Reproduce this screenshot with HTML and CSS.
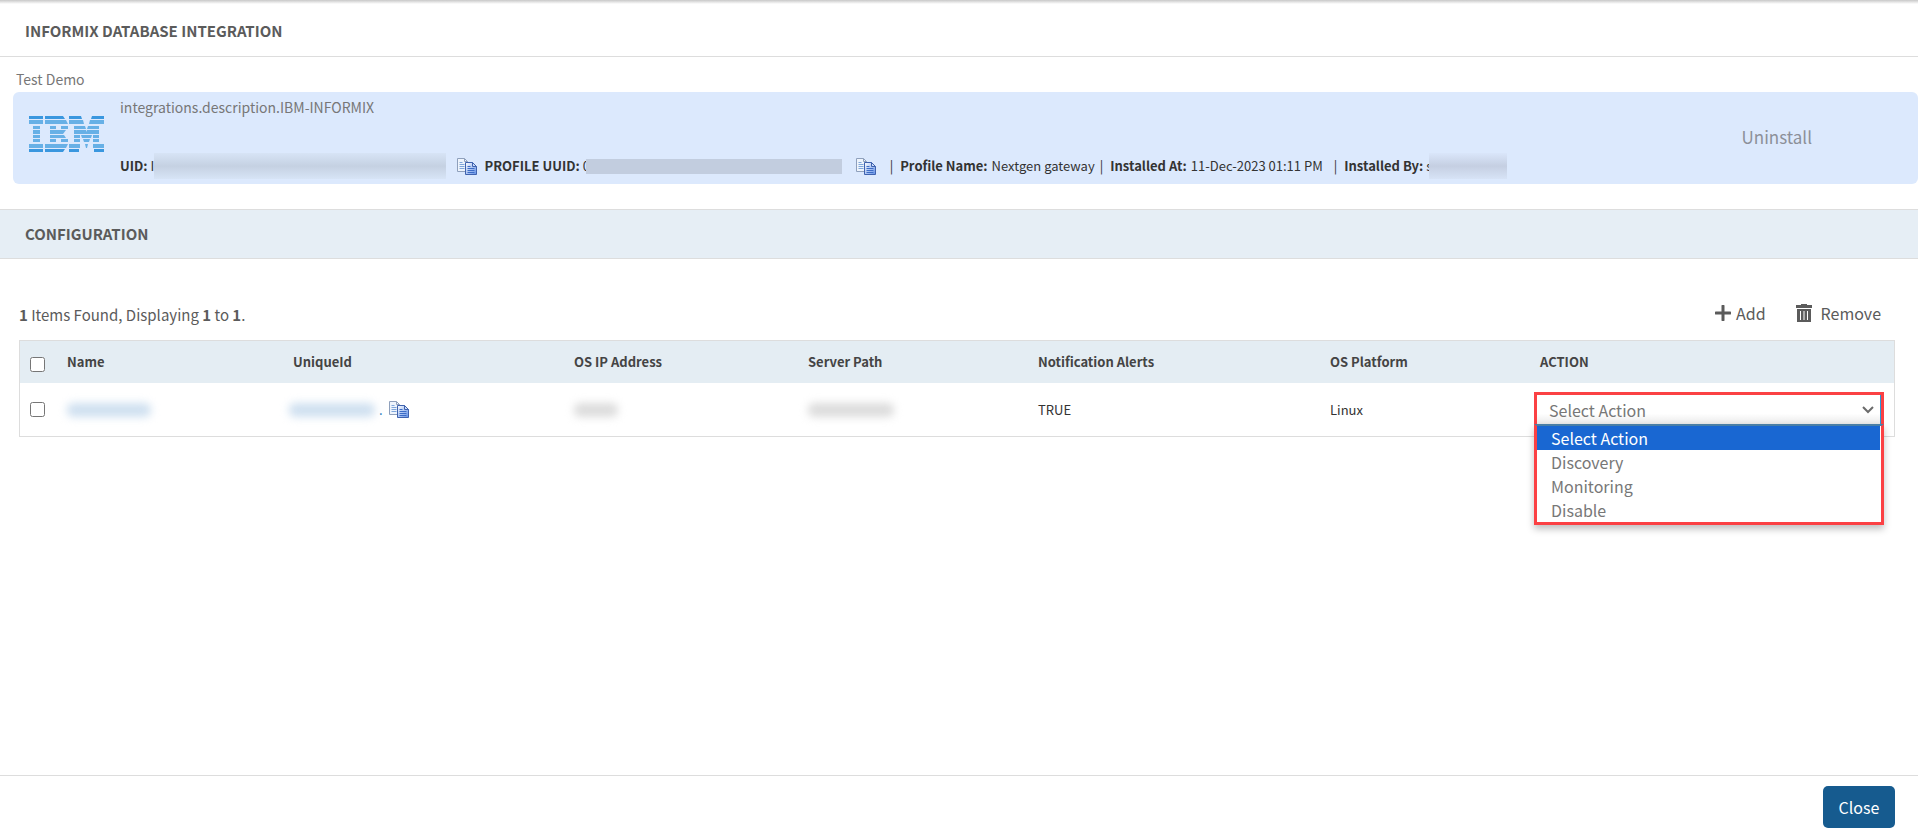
FILE: index.html
```html
<!DOCTYPE html>
<html lang="en">
<head>
<meta charset="utf-8">
<title>Informix Database Integration</title>
<link rel="stylesheet" href="styles.css">
</head>
<body>

<svg class="defs" width="0" height="0">
	<defs>
		<linearGradient id="pageFill" x1="0" y1="0" x2="1" y2="1">
			<stop offset="0" stop-color="#fff"/>
			<stop offset="1" stop-color="#5f8ee6"/>
		</linearGradient>
		<symbol id="copy" viewBox="0 0 20 17">
			<path d="M.5.5h7l3 3v10H.5z" fill="#eef4fc" stroke="#8fa0bc"/>
			<path d="M7.500.5v3h3" fill="none" stroke="#8fa0bc"/>
			<path d="M2.500 4.500h3M2.500 6.500h5M2.500 8.500h5M2.500 10.500h5" stroke="#7fa6da"/>
			<path d="M8.500 4.500h7l4 4v8h-11z" fill="url(#pageFill)" stroke="#3f62ae"/>
			<path d="M15.500 4.500v4h4z" fill="#c9dafa" stroke="#3f62ae"/>
			<path d="M10.500 8.500h3M10.500 10.500h7M10.500 12.500h7M10.500 14.500h7" stroke="#3d6cc6"/>
		</symbol>
	</defs>
</svg>

<div class="header">
	<h1>INFORMIX DATABASE INTEGRATION</h1>
</div>

<div class="app">
	<div class="app-name">Test Demo</div>
	<div class="card">
		<svg class="logo" viewBox="0 0 75 36" role="img" aria-label="IBM">
			<g fill="#3a97df">
				<path d="M0 0h14v3H0zM16 0h18l2 3H16zM40 0h12l1 3H40zM63 0h12v3H62z"/>
				<path d="M0 33h14v3H0zM16 33h20l-2 3H16zM40 33h10v3H40zM65 33h10v3H65z"/>
			</g>
			<g fill="#67b0e6">
				<path d="M0 4h14v4H0zM16 4h21l2 4H16zM40 4h14l1 4H40zM61 4h14v4H60z"/>
				<path d="M4 10h7v3H4zM21 10h6v3h-6zM32 10h7v3h-7zM45 10h11l1 3H45zM59 10h11v3H58z"/>
				<path d="M4 14h7v4H4zM21 14h16l-3 4H21zM45 14h12l1 4H45zM58 14h12v4H57z"/>
				<path d="M4 19h7v3H4zM21 19h14l2 3H21zM45 19h6v3h-6zM52 19h11l-1 3h-9zM64 19h6v3h-6z"/>
				<path d="M4 23h7v3H4zM21 23h6v3h-6zM32 23h7v3h-7zM45 23h6v3h-6zM54 23h7l-1 3h-5zM64 23h6v3h-6z"/>
				<path d="M0 28h14v4H0zM16 28h23l-2 4H16zM40 28h11v4H40zM56 28h3l-1 4h-1zM64 28h11v4H64z"/>
			</g>
		</svg>
		<div class="info">
			<div class="desc">integrations.description.IBM-INFORMIX</div>
			<div class="meta">
				<b>UID:</b><span class="frag">I</span><span class="mask mask-uid"></span>
				<button class="copy" aria-label="Copy UID"><svg><use href="#copy"/></svg></button>
				<b>PROFILE UUID:</b><span class="frag">0</span><span class="mask mask-uuid"></span>
				<button class="copy" aria-label="Copy profile UUID"><svg><use href="#copy"/></svg></button>
				<span class="sep first">|</span><b>Profile Name:</b><span class="val">Nextgen gateway</span>
				<span class="sep">|</span><b>Installed At:</b><span class="val">11-Dec-2023 01:11 PM</span>
				<span class="sep wide">|</span><b>Installed By:</b><span class="frag">s</span><span class="mask mask-user"></span>
			</div>
		</div>
		<button class="uninstall">Uninstall</button>
	</div>
</div>

<div class="section">
	<h2>CONFIGURATION</h2>
</div>

<div class="content">
	<div class="toolbar">
		<div class="count"><b>1</b> Items Found, Displaying <b>1</b> to <b>1</b>.</div>
		<button class="tool">
			<svg width="16" height="16" viewBox="0 0 16 16"><path d="M8 1v14M1 8h14" stroke="#5b5b5b" stroke-width="3" stroke-linecap="round"/></svg>
			Add
		</button>
		<button class="tool remove">
			<svg width="16" height="18" viewBox="0 0 16 18"><path d="M5 0h6v1h5v3H0V1h5zM1 5h14v13H1z" fill="#5b5b5b"/><path d="M4.500 7v9M8 7v9M11.500 7v9" stroke="#fff"/></svg>
			Remove
		</button>
	</div>

	<table class="grid">
		<thead>
			<tr>
				<th class="c-check"><input type="checkbox" aria-label="Select all"></th>
				<th class="c-name">Name</th>
				<th class="c-id">UniqueId</th>
				<th class="c-ip">OS IP Address</th>
				<th class="c-path">Server Path</th>
				<th class="c-alert">Notification Alerts</th>
				<th class="c-os">OS Platform</th>
				<th class="c-action">ACTION</th>
			</tr>
		</thead>
		<tbody>
			<tr>
				<td class="c-check"><input type="checkbox" aria-label="Select row"></td>
				<td><span class="smudge blue s-name"></span></td>
				<td><div class="id-cell"><span class="smudge blue s-id"></span><a href="#">.</a><button class="copy" aria-label="Copy unique id"><svg><use href="#copy"/></svg></button></div></td>
				<td><span class="smudge s-ip"></span></td>
				<td><span class="smudge s-path"></span></td>
				<td>TRUE</td>
				<td>Linux</td>
				<td class="action-cell">
					<div class="picker">
						<select aria-label="Action">
							<option>Select Action</option>
						</select>
						<svg class="arrow" width="12" height="8" viewBox="0 0 12 8"><path d="M1 1l5 5 5-5" fill="none" stroke="#6b6b6b" stroke-width="2"/></svg>
						<ul class="menu">
							<li class="active">Select Action</li>
							<li>Discovery</li>
							<li>Monitoring</li>
							<li>Disable</li>
						</ul>
					</div>
				</td>
			</tr>
		</tbody>
	</table>
</div>

<div class="footer">
	<button class="close">Close</button>
</div>

</body>
</html>
```
FILE: styles.css
```css
*{
	box-sizing:border-box;
}
body{
	margin:0;
	min-height:100vh;
	display:flex;
	flex-direction:column;
	font:14px/20px "Noto Sans CJK SC", "Noto Sans", sans-serif;
	color:#333;
	background:#fff;
}
button{
	font:inherit;
	color:inherit;
	border:0;
	padding:0;
	background:none;
	cursor:pointer;
}
.defs{
	position:absolute;
}
.header{
	height:57px;
	padding:6px 25px 0;
	display:flex;
	align-items:center;
	border-bottom:1px solid #ddd;
	background:linear-gradient(#c8c8c8, #fff 4px);
}
h1, h2{
	margin:0;
	font-size:15px;
	line-height:20px;
	font-weight:bold;
	color:#5b5b5b;
}
.app{
	padding:12px 0 25px 13px;
}
.app-name{
	padding:0 0 3px 3px;
	color:#777;
}
.card{
	display:flex;
	align-items:center;
	height:92px;
	padding:0 106px 0 16px;
	border-radius:6px;
	background:#dce9fd;
}
.logo{
	width:75px;
	height:36px;
	margin:0 16px 8px 0;
	flex:none;
}
.info{
	flex:1;
	height:92px;
	padding:5px 0;
	display:flex;
	flex-direction:column;
	justify-content:space-between;
}
.desc{
	color:#777;
}
.meta{
	display:flex;
	align-items:center;
	white-space:nowrap;
	font-size:13px;
}
/* first letter, the mask covers the rest of the value */
.frag{
	width:3px;
	margin-left:3px;
}
.mask{
	position:relative;
	background:#c2cddf;
}
.mask-uid{
	width:292px;
	height:26px;
	background:linear-gradient(#d7e4f6, #c5d1e2 50%, #d7e4f6);
}
.mask-uuid{
	width:256px;
	height:15px;
	margin-right:3px;
}
.mask-user{
	width:78px;
	height:26px;
	background:linear-gradient(#dae6fa, #c5cfe2 50%, #d7e3f6);
}
.copy{
	display:flex;
	margin:0 8px 0 11px;
}
.copy svg{
	width:20px;
	height:17px;
}
.val{
	margin-left:4px;
}
.sep{
	margin:0 7px 0 5px;
}
.sep.first{
	margin-left:6px;
}
.sep.wide{
	margin-left:11px;
}
.uninstall{
	padding-bottom:2px;
	font-size:17px;
	color:#8c9099;
}
.section{
	height:50px;
	padding:0 25px;
	display:flex;
	align-items:center;
	background:#e6eef5;
	border-top:1px solid #ddd;
	border-bottom:1px solid #ddd;
}
.content{
	flex:1;
	padding:40px 23px 0 19px;
}
.toolbar{
	display:flex;
	align-items:center;
	height:32px;
	margin-bottom:9px;
	padding-right:14px;
	color:#5b5b5b;
}
.count{
	flex:1;
	font-size:15px;
}
.tool{
	display:flex;
	align-items:center;
	gap:5px;
	padding-bottom:4px;
	font-size:16px;
}
.tool.remove{
	gap:9px;
	margin-left:30px;
}
.grid{
	width:100%;
	table-layout:fixed;
	border-collapse:separate;
	border-spacing:0;
	border:1px solid #ddd;
	font-size:13px;
}
.grid th{
	height:42px;
	padding:0;
	text-align:left;
	color:#444;
	background:#e4edf3;
}
.grid td{
	height:53px;
	padding:0;
}
.grid input{
	display:block;
	width:15px;
	height:15px;
	margin:0 0 0 10px;
}
.grid th input{
	margin-top:4px;
}
.c-check{
	width:47px;
}
.c-name{
	width:226px;
}
.c-id{
	width:281px;
}
.c-ip{
	width:234px;
}
.c-path{
	width:230px;
}
.c-alert{
	width:292px;
}
.c-os{
	width:210px;
}
.smudge{
	display:block;
	height:14px;
	border-radius:6px;
	background:#dcdcdc;
	filter:blur(4px);
}
.smudge.blue{
	background:#cfe0f0;
}
.s-name{
	width:84px;
}
.s-id{
	width:86px;
}
.s-ip{
	width:44px;
}
.s-path{
	width:86px;
}
.id-cell{
	display:flex;
	align-items:center;
	margin-left:-4px;
}
.id-cell a{
	margin-left:4px;
	color:#0d6cb5;
	text-decoration:none;
}
.id-cell .copy{
	margin:0 0 0 6px;
}
.action-cell{
	vertical-align:top;
}
.picker{
	position:relative;
	width:350px;
	height:36px;
	margin:9px 0 0 -6px;
}
.picker select{
	appearance:none;
	display:block;
	width:100%;
	height:34px;
	padding:0 12px 2px;
	border:3px solid #fb4144;
	border-bottom:0;
	border-radius:0;
	outline:0;
	font:16px/24px "Noto Sans CJK SC", "Noto Sans", sans-serif;
	color:#777;
	background:linear-gradient(#fff 60%, #e6e6e6);
	box-shadow:inset -1px 0 #2b9bd8;
}
.arrow{
	position:absolute;
	top:14px;
	right:10px;
}
/* open list, drawn over the row below */
.menu{
	position:absolute;
	top:32px;
	left:0;
	right:0;
	margin:0;
	padding:0;
	list-style:none;
	border:3px solid #fb4144;
	border-top:2px solid #4a7fa6;
	background:#fff;
	box-shadow:0 4px 7px rgba(0,0,0,.25);
	font-size:16px;
	line-height:24px;
	color:#777;
}
.menu li{
	padding:0 14px;
}
.menu .active{
	margin-right:1px;
	color:#fff;
	background:#1967d2;
}
.footer{
	display:flex;
	justify-content:flex-end;
	padding:10px 23px;
	border-top:1px solid #ddd;
}
.close{
	width:72px;
	height:42px;
	padding-bottom:1px;
	border-radius:5px;
	font-size:16px;
	color:#fff;
	background:#165b8f;
}
```
